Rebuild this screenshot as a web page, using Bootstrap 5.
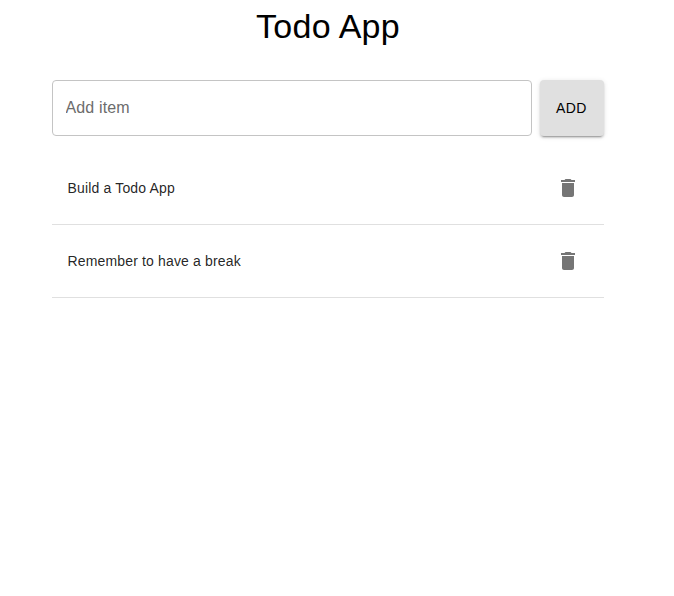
<!DOCTYPE html>
<html lang="en">
<head>
<meta charset="utf-8">
<meta name="viewport" content="width=device-width, initial-scale=1">
<title>Todo App</title>
<link href="https://cdn.jsdelivr.net/npm/bootstrap@5.3.0/dist/css/bootstrap.min.css" rel="stylesheet">
<style>
body { font-family: "Liberation Sans", Arial, sans-serif; color: #000; background: #fff; }
.todo-app { width: 552px; margin-left: 52px; }
.todo-title { font-size: 34px; line-height: 40px; letter-spacing: .25px; font-weight: 400; padding-top: 6px; margin-bottom: 34px; }
.todo-input.form-control { height: 56px; padding: 0 12.5px; border: 1px solid #c4c4c4; border-radius: 4px; font-size: 16px; letter-spacing: .15px; }
.todo-input::placeholder { color: #6c6c6c; opacity: 1; }
.todo-add.btn { width: 64px; height: 56px; padding: 0 1px 0 0; border: 0; border-radius: 4px; background: #e0e0e0; color: #000; font-size: 14px; font-weight: 500; letter-spacing: .4px;
  box-shadow: 0 3px 1px -2px rgba(0,0,0,.2), 0 2px 2px 0 rgba(0,0,0,.14), 0 1px 5px 0 rgba(0,0,0,.12); }
.todo-list { margin-top: 16px; }
.todo-list .todo-item.list-group-item { height: 73px; padding: 0 24px 0 15.6px; border: 0; border-bottom: 1px solid #e0e0e0; font-size: 14px; letter-spacing: .15px; color: rgba(0,0,0,.87); }
.todo-delete.btn { color: #757575; line-height: 0; }
</style>
<script src="https://cdn.jsdelivr.net/npm/bootstrap@5.3.0/dist/js/bootstrap.bundle.min.js"></script>
</head>
<body>
<main class="todo-app">
  <h1 class="todo-title text-center">Todo App</h1>
  <form class="d-flex gap-2">
    <input class="todo-input form-control" type="text" placeholder="Add item" aria-label="Add item">
    <button class="todo-add btn flex-shrink-0" type="button">ADD</button>
  </form>
  <ul class="todo-list list-group list-group-flush rounded-0">
    <li class="todo-item list-group-item d-flex align-items-center justify-content-between">
      <span>Build a Todo App</span>
      <button class="todo-delete btn border-0 p-0" type="button" aria-label="Delete"><svg width="24" height="24" viewBox="0 0 24 24" fill="currentColor"><path d="M6 19c0 1.100.9 2 2 2h8c1.100 0 2-.9 2-2V7H6v12zM19 4h-3.500l-1-1h-5l-1 1H5v2h14V4z"/></svg></button>
    </li>
    <li class="todo-item list-group-item d-flex align-items-center justify-content-between">
      <span>Remember to have a break</span>
      <button class="todo-delete btn border-0 p-0" type="button" aria-label="Delete"><svg width="24" height="24" viewBox="0 0 24 24" fill="currentColor"><path d="M6 19c0 1.100.9 2 2 2h8c1.100 0 2-.9 2-2V7H6v12zM19 4h-3.500l-1-1h-5l-1 1H5v2h14V4z"/></svg></button>
    </li>
  </ul>
</main>
</body>
</html>
